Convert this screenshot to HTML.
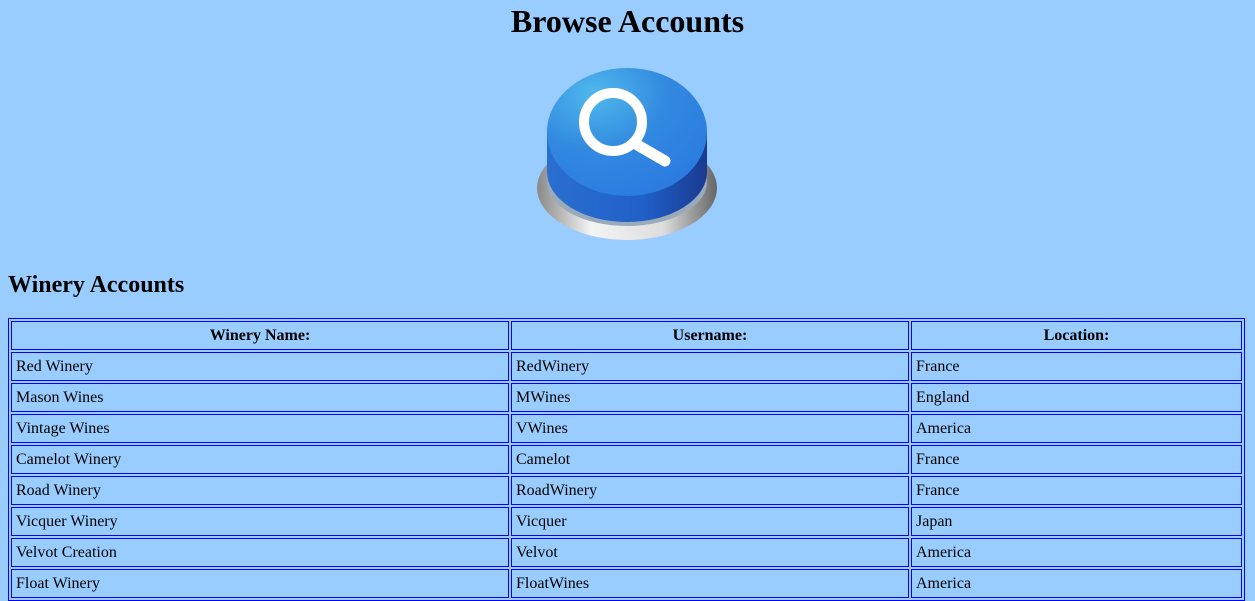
<!DOCTYPE html>
<html><head><meta charset="utf-8"><style>
body{margin:0;background:#99CCFF;font-family:"Liberation Serif",serif;color:#000;overflow:hidden;width:1255px;height:585px}
h1{margin:0;text-align:center;font-size:32px;line-height:42px;height:42px}
.img{position:absolute;left:535px;top:62px}
h2{position:absolute;left:8px;top:271px;margin:0;font-size:24px;line-height:28px}
table{position:absolute;left:8px;top:318px;width:1237px;border:1px solid #00f;border-spacing:2px;font-size:16px}
td,th{border:1px solid #00f;padding:5px 4px 4px;line-height:18px;text-align:left}
th{text-align:center}
</style></head><body>
<h1>Browse Accounts</h1>
<svg class="img" width="186" height="182" viewBox="0 0 186 182">
<defs>
<linearGradient id="s" x1="0" x2="1"><stop offset="0" stop-color="#888"/><stop offset=".3" stop-color="#f4f4f4"/><stop offset=".7" stop-color="#ddd"/><stop offset="1" stop-color="#666"/></linearGradient>
<linearGradient id="side" x1="0" x2="1"><stop offset="0" stop-color="#2a6fd0"/><stop offset=".6" stop-color="#2060c8"/><stop offset="1" stop-color="#1a3a90"/></linearGradient>
<radialGradient id="top" cx=".3" cy=".2" r=".9"><stop offset="0" stop-color="#4fb8ec"/><stop offset=".5" stop-color="#3289e0"/><stop offset="1" stop-color="#2a7ae0"/></radialGradient>
</defs>
<ellipse cx="92" cy="126" rx="90" ry="52" fill="url(#s)"/>
<ellipse cx="92" cy="120" rx="80" ry="44" fill="#9ab"/>
<path d="M12 70 L12 110 A80 50 0 0 0 172 110 L172 70 Z" fill="url(#side)"/>
<ellipse cx="92" cy="70" rx="80" ry="64" fill="url(#top)"/>
<circle cx="78" cy="60" r="29" fill="none" stroke="#fff" stroke-width="10"/>
<path d="M99 81 L130 99" stroke="#fff" stroke-width="11" stroke-linecap="round"/>
</svg>
<h2>Winery Accounts</h2>
<table>
<tr><th style="width:488px">Winery Name:</th><th style="width:388px">Username:</th><th>Location:</th></tr>
<tr><td>Red Winery</td><td>RedWinery</td><td>France</td></tr>
<tr><td>Mason Wines</td><td>MWines</td><td>England</td></tr>
<tr><td>Vintage Wines</td><td>VWines</td><td>America</td></tr>
<tr><td>Camelot Winery</td><td>Camelot</td><td>France</td></tr>
<tr><td>Road Winery</td><td>RoadWinery</td><td>France</td></tr>
<tr><td>Vicquer Winery</td><td>Vicquer</td><td>Japan</td></tr>
<tr><td>Velvot Creation</td><td>Velvot</td><td>America</td></tr>
<tr><td>Float Winery</td><td>FloatWines</td><td>America</td></tr>
</table>
</body></html>
